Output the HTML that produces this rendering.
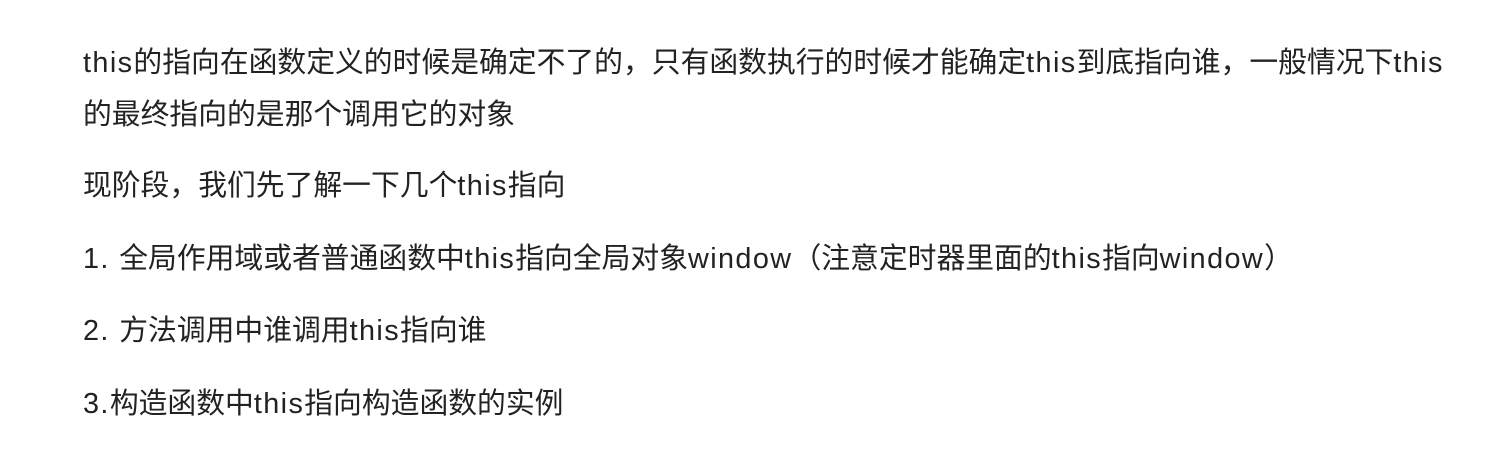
<!DOCTYPE html>
<html><head><meta charset="utf-8"><style>
html,body{margin:0;padding:0;background:#fff;width:1494px;height:463px;overflow:hidden}
p{position:absolute;left:83px;margin:0;font-family:"Liberation Sans","Noto Sans CJK SC",sans-serif;font-size:28.8px;line-height:52px;color:#222;white-space:nowrap}
i{font-style:normal;letter-spacing:1.4px}
</style></head><body>
<p style="top:37px"><i>this</i>的指向在函数定义的时候是确定不了的，只有函数执行的时候才能确定<i>this</i>到底指向谁，一般情况下<i>this</i><br>的最终指向的是那个调用它的对象</p>
<p style="top:160px">现阶段，我们先了解一下几个<i>this</i>指向</p>
<p style="top:233px"><i>1. </i>全局作用域或者普通函数中<i>this</i>指向全局对象<i>window</i>（注意定时器里面的<i>this</i>指向<i>window</i>）</p>
<p style="top:305px"><i>2. </i>方法调用中谁调用<i>this</i>指向谁</p>
<p style="top:378px"><i>3.</i>构造函数中<i>this</i>指向构造函数的实例</p>
</body></html>
